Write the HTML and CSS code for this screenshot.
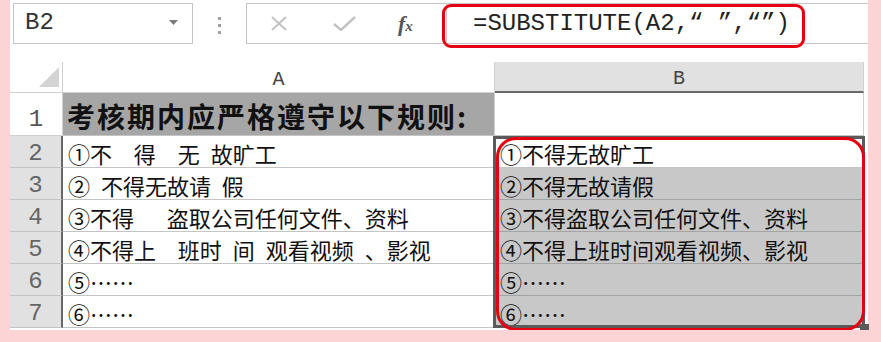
FILE: index.html
```html
<!DOCTYPE html>
<html lang="zh-CN">
<head>
    <meta charset="UTF-8">
    <title>SUBSTITUTE</title>
    <link rel="stylesheet" href="styles.css">
</head>
<body>

    <div class="sheet">
        <!-- Navneboks og formellinje -->
        <div class="toolbar">
            <div class="namebox">
                <span>B2</span>
                <svg width="9" height="5" viewBox="0 0 9 5"><path d="M0 0h9L4.5 5z" fill="#7a7a7a"/></svg>
            </div>
            <div class="grip"><i></i><i></i><i></i></div>
            <div class="fbar">
                <div class="fbtns">
                    <svg class="ico-x" width="18" height="15" viewBox="0 0 18 15"><path d="M2 1l14 13M16 1L2 14" stroke="#c2c2c2" stroke-width="2" fill="none"/></svg>
                    <svg class="ico-ok" width="23" height="15" viewBox="0 0 23 15"><path d="M1 8l7 6L22 1" stroke="#c2c2c2" stroke-width="2.4" fill="none"/></svg>
                    <span class="fx"><b>f</b><i>x</i></span>
                </div>
                <div class="finput">
                    =SUBSTITUTE(A2,“ ”,“”)
                    <div class="mark"></div>
                </div>
            </div>
        </div>

        <!-- Regneark -->
        <div class="grid">
            <div class="corner">
                <svg width="22" height="22" viewBox="0 0 22 22"><path d="M21 1V21H1z" fill="#d3d3d3"/></svg>
            </div>
            <div class="hd">A</div>
            <div class="hd on">B</div>

            <div class="rh first">1</div>
            <div class="c title">考核期内应严格遵守以下规则:</div>
            <div class="c"></div>

            <div class="rh on">2</div>
            <div class="c">①不  得  无 故旷工</div>
            <div class="c">①不得无故旷工</div>

            <div class="rh on">3</div>
            <div class="c">② 不得无故请 假</div>
            <div class="c on">②不得无故请假</div>

            <div class="rh on">4</div>
            <div class="c">③不得   盗取公司任何文件、资料</div>
            <div class="c on">③不得盗取公司任何文件、资料</div>

            <div class="rh on">5</div>
            <div class="c">④不得上  班时 间 观看视频 、影视</div>
            <div class="c on">④不得上班时间观看视频、影视</div>

            <div class="rh on">6</div>
            <div class="c">⑤……</div>
            <div class="c on">⑤……</div>

            <div class="rh on">7</div>
            <div class="c">⑥……</div>
            <div class="c on">⑥……</div>

            <!-- Markering B2:B7 med rød ramme -->
            <div class="sel">
                <div class="handle"></div>
                <div class="ring"></div>
            </div>
        </div>
    </div>

</body>
</html>
```

FILE: styles.css
```css
/* Baggrund */
body {
    margin: 0;
    background: #fcd4d6;
    font-family: "Noto Sans CJK SC", sans-serif;
    color: #111;
}

.sheet {
    margin-left: 10px;
    width: 858px;
    height: 330px;
    background: #fff;
}

/* Formellinje */
.toolbar {
    height: 62px;
    padding-top: 3px;
    box-sizing: border-box;
    display: flex;
    align-items: flex-start;
}

.namebox {
    margin-left: 3px;
    width: 180px;
    height: 41px;
    border: 1px solid #c4c4c4;
    box-sizing: border-box;
    display: flex;
    align-items: center;
    justify-content: space-between;
    padding: 0 14px 2px 11px;
}

.namebox span {
    font: 24px "Liberation Mono", monospace;
    color: #333;
}

.grip {
    margin-left: 25px;
    padding-top: 14px;
    display: flex;
    flex-direction: column;
    gap: 4px;
}

.grip i {
    display: block;
    width: 3px;
    height: 3px;
    background: #a0a0a0;
}

.fbar {
    margin-left: 25px;
    flex: 1;
    height: 41px;
    border: 1px solid #c4c4c4;
    border-right: none;
    box-sizing: border-box;
    display: flex;
}

.fbtns {
    width: 199px;
    display: flex;
    align-items: center;
    padding-left: 23px;
    box-sizing: border-box;
}

.ico-ok {
    margin-left: 45px;
}

.fx {
    margin-left: 42px;
    font-family: "Liberation Serif", serif;
    font-style: italic;
    color: #555;
}

.fx b {
    font-size: 22px;
}

.fx i {
    font-size: 15px;
    font-weight: bold;
}

.finput {
    position: relative;
    flex: 1;
    border-left: 1px solid #c4c4c4;
    padding-left: 26px;
    font: 24px/39px "Liberation Mono", monospace;
    color: #222;
    white-space: nowrap;
}

.finput .mark {
    position: absolute;
    left: -5px;
    top: 0;
    width: 363px;
    height: 44px;
    border: 3px solid #e60012;
    border-radius: 9px;
    box-sizing: border-box;
}

/* Celler */
.grid {
    position: relative;
    display: grid;
    grid-template-columns: 53px 432px 369px;
    grid-template-rows: 31px 43px repeat(6, 32px);
}

.corner {
    border-right: 1px solid #d0d0d0;
    border-bottom: 1px solid #d0d0d0;
    display: flex;
    align-items: flex-end;
    justify-content: flex-end;
    padding: 0 2px 4px 0;
}

.hd {
    border-right: 1px solid #d0d0d0;
    border-bottom: 1px solid #d0d0d0;
    display: flex;
    align-items: center;
    justify-content: center;
    padding-top: 4px;
    font: 20px "Liberation Mono", monospace;
    color: #444;
}

.hd.on {
    background: #e1e1e1;
    border-bottom: 2px solid #686868;
}

.rh {
    border-right: 1px solid #d0d0d0;
    border-bottom: 1px solid #d0d0d0;
    display: flex;
    align-items: center;
    justify-content: center;
    padding-top: 3px;
    font: 24px "Liberation Mono", monospace;
    color: #555;
}

.rh.first {
    align-items: flex-end;
    padding-bottom: 2px;
}

.rh.on {
    background: #e1e1e1;
    border-right: 2px solid #686868;
    border-bottom-color: #c4c4c4;
    color: #666;
}

.c {
    border-right: 1px solid #cfcfcf;
    border-bottom: 1px solid #c4c4c4;
    display: flex;
    align-items: center;
    padding: 3px 0 0 5px;
    font-size: 22px;
    white-space: pre;
    word-spacing: 6px;
    overflow: hidden;
}

.c.title {
    background: #a6a6a6;
    font-size: 28px;
    font-weight: bold;
    letter-spacing: 2px;
    padding-left: 4px;
}

.c.on {
    background: #c8c8c8;
    border-bottom-color: #a4a4a4;
}

/* Markeringen ligger oven på cellerne */
.sel {
    position: absolute;
    left: 483px;
    top: 74px;
    width: 372px;
    height: 192px;
    border: 3px solid #5a5a5a;
    box-sizing: border-box;
}

.handle {
    position: absolute;
    right: -7px;
    bottom: -8px;
    width: 9px;
    height: 9px;
    background: #5a5a5a;
}

.ring {
    position: absolute;
    left: 0;
    right: -3px;
    top: -2px;
    bottom: -6px;
    border: 3px solid #e60012;
    border-radius: 20px;
}
```
